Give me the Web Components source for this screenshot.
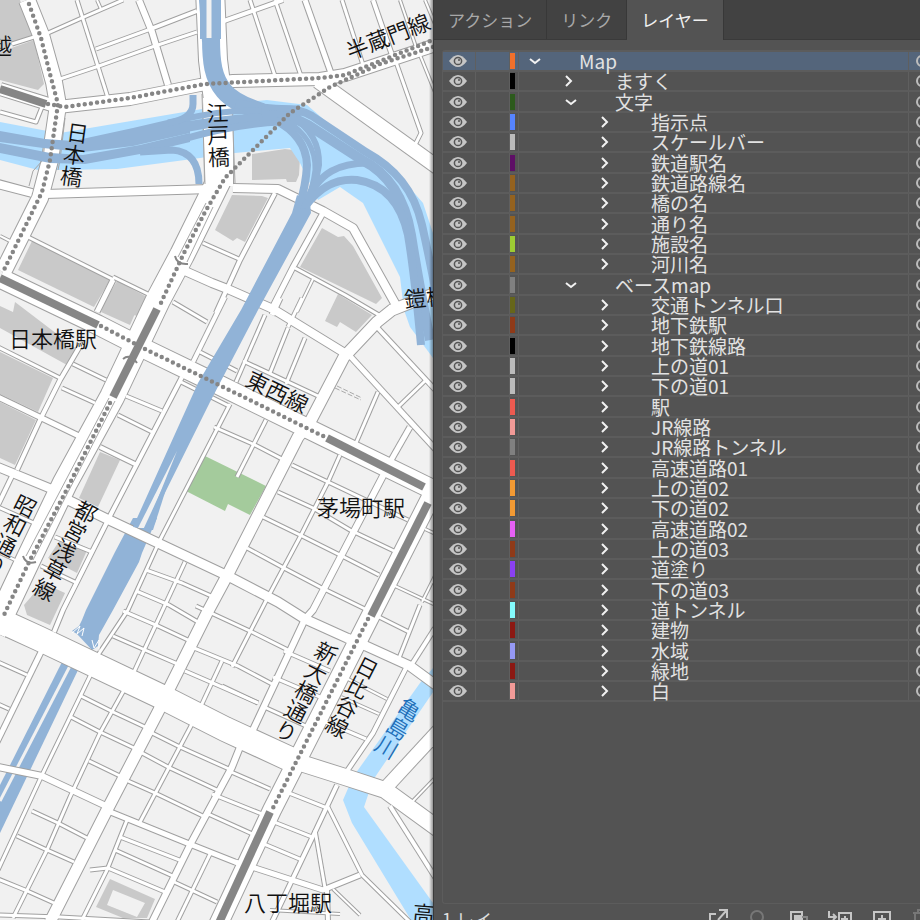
<!DOCTYPE html>
<html lang="ja">
<head>
<meta charset="utf-8">
<title>レイヤー</title>
<style>
  html, body { margin: 0; height: 100%; }
  body {
    overflow: hidden;
    font-family: "Noto Sans CJK JP", "Liberation Sans", sans-serif;
    background: #535353;
  }
</style>
</head>
<body>
<map-workspace>
  <city-map slot="canvas"></city-map>
  <layer-panel slot="panel"></layer-panel>
</map-workspace>

<script>
// [white width, centre line]
const roads = [
  [16, '27,0 41,35 54,82 58,105 50,160 40,198 3,272'],
  [12, '0,89 58,107 130,99 200,85 233,81 320,79 345,75 433,46'],
  [28, '210,-10 213,60 218,100 219,185'],
  [24, '219,180 182,255 158,300 112,397 65,483 28,560 -6,632'],
  [19, '0,278 98,325 147,350 211,381 325,437 440,493'],
  [24, '-10,616 38,638 160,696 225,729 290,759'],
  [16, '285,758 345,777 385,790 440,830'],
  [18, '436,487 371,615 272,810 218,925'],
  [11, '433,294 410,303 392,310 377,322 344,357 310,422 298,437 229,572 207,613 170,687 159,710 108,808 50,922'],
  [14, '318,81 440,169'],
  [3, '77,0 108,98'], [2, '97,0 101,9'], [6, '139,0 152,32 168,85'],
  [3, '48,33 84,17 123,0'], [3, '96,49 148,30'], [4, '148,30 197,11'],
  [3, '60,79 99,66 152,47 197,32'], [3, '12,44 34,37'],
  [3, '0,112 36,122 42,107'],
  [8, '-2,184 32,193'], [8, '45,194 210,189'],
  [2, '0,236 10,241'], [3, '28,237 114,280'], [3, '113,277 150,295'], [5, '113,280 97,312'],
  [3, '203,243 239,259'], [8, '185,271 212,283 230,290 273,309 343,352'],
  [4, '275,193 240,260 216,313'],
  [8, '233,188 278,189 323,211 353,228 396,305'],
  [5, '323,213 293,267 270,312'], [3, '295,268 345,295 379,315'], [2, '313,279 297,312'],
  [3, '250,0 275,76'], [3, '275,0 301,76'], [5, '305,0 332,76'], [3, '342,0 364,68'],
  [4, '373,0 393,58'], [2, '400,0 417,50'], [2, '425,0 435,24'], [4, '224,21 283,0'],
  [3, '396,62 421,133 415,145'], [2, '420,55 435,92'],
  [3, '-2,347 60,378'], [4, '80,346 60,380 40,420 17,470'],
  [3, '73,364 106,380'], [3, '62,388 95,403'], [5, '-2,397 79,436'],
  [8, '-2,467 54,490'], [4, '12,476 -2,505'], [3, '-2,507 34,523'], [2, '-2,552 15,560'],
  [3, '126,396 162,411'], [3, '118,415 152,432'], [4, '100,447 137,465'],
  [4, '182,377 111,514 63,610 54,632'], [3, '181,382 229,406'],
  [3, '230,404 160,540 128,610 98,655'], [3, '214,427 255,445 284,460'],
  [9, '68,500 107,519 228,576 278,602 305,619 347,638 366,646 410,666 440,688'],
  [3, '55,537 92,552'], [3, '41,566 77,583'],
  [4, '225,297 193,362'], [3, '173,302 207,322'], [3, '200,352 237,371'],
  [3, '185,562 133,674'], [3, '146,570 182,583 218,599'], [3, '136,591 169,605 198,622'],
  [3, '123,611 158,626 190,641'], [3, '113,636 145,650 180,665'],
  [3, '340,455 328,482 300,537 268,597 232,667'],
  [6, '385,472 353,533 313,610 305,619 252,732'],
  [3, '292,465 328,482 408,520'], [3, '278,492 313,508 350,530 394,551'],
  [3, '263,517 300,535 340,555 379,575'], [3, '247,548 282,567 320,587 365,609'],
  [3, '266,420 237,477'], [3, '265,315 236,382'], [3, '288,328 270,373'], [3, '305,338 286,384'],
  [3, '243,361 318,396'], [3, '302,298 288,327'], [5, '280,298 272,315'],
  [4, '375,325 440,395'], [5, '350,356 440,454'], [3, '425,381 397,408'],
  [3, '378,392 356,443'], [5, '410,427 390,462'],
  [2, '425,529 440,536'], [2, '395,586 440,607'], [2, '422,602 435,576'],
  [3, '420,605 399,658'], [3, '375,615 409,632'], [4, '435,628 412,664'],
  [4, '406,668 373,733 343,777'], [2, '348,679 387,699'], [2, '341,697 379,714'], [3, '326,722 366,739'],
  [3, '284,651 330,671'], [3, '273,677 320,697'], [3, '262,706 306,726'],
  [3, '196,606 252,632 292,652'], [3, '194,648 238,666 274,685'], [3, '222,686 258,703'],
  [3, '222,661 201,706'], [3, '185,671 215,684 258,703'],
  [3, '192,724 139,824'], [6, '242,742 232,767 191,843 152,922'],
  [3, '152,733 180,747 229,769'], [3, '142,753 170,768 217,790'], [3, '128,781 155,793 205,817'],
  [5, '108,811 187,843 235,862 255,868 323,890 360,875'],
  [3, '127,820 107,870 82,920'], [3, '120,837 182,861'], [3, '115,850 175,877'],
  [3, '90,870 108,868 165,892'], [3, '211,852 177,922'], [3, '172,881 217,902'],
  [5, '42,650 -3,742'], [3, '-2,662 27,675'], [3, '-2,704 9,709'],
  [3, '92,672 42,775 -2,870'], [3, '124,690 100,733 70,797 47,850 13,918'],
  [3, '81,696 113,712 145,727'], [3, '71,717 100,732 134,748'], [3, '89,761 120,776'],
  [3, '32,811 58,823 87,838'], [3, '17,836 47,850 74,862'], [3, '-2,879 25,890 54,903'],
  [6, '-2,767 42,776 106,806'], [3, '-2,915 60,917 150,922'],
  [4, '337,785 315,832 272,922'], [3, '289,793 327,808'], [3, '274,822 312,837'], [3, '264,844 302,860'],
  [3, '328,807 362,875 410,922'], [3, '315,830 325,888'], [4, '327,890 328,922'], [2, '333,889 360,915'],
  [4, '390,806 440,885'], [13, '380,794 440,729'], [2, '411,803 435,778'],
  [3, '229,771 270,789'], [3, '212,794 262,814'], [3, '206,813 257,836'],
  [2, '270,910 340,914']
]

const buildings = [
  '0,0 20,0 32,36 0,50', '0,52 34,40 44,84 38,90 0,80',
  '32,241 110,280 94,307 18,270', '117,281 147,297 139,316 100,310',
  '252,154 285,149 294,150 300,158 299,175 296,182 287,182 286,179 252,180',
  '232,195 262,196 268,198 245,242 237,238 233,241 215,230',
  '322,228 338,237 344,236 353,246 382,298 376,304 300,267', '338,294 372,315 356,332 340,322 337,327 325,321',
  '0,306 13,312 15,302 78,350 67,365 0,328', '0,352 53,378 38,412 0,394', '0,402 36,420 15,465 0,458',
  '107,300 141,300 130,325 101,312', '100,452 120,460 98,507 79,498',
  '62,537 88,548 77,573 48,558', '43,583 65,593 50,625 27,615 24,605'
]

const waters = [
  '0,122 42,130 60,133 202,109 235,103 267,100 307,105 363,153 403,180 423,203 433,233 433,358 410,327 404,310 400,277 363,203 340,187 318,200 300,163 290,148 235,153 200,158 117,169 58,170 38,170 0,160',
  '440,660 420,683 353,777 343,800 352,823 414,925 440,925 433,903 364,807 373,780 440,682'
]

// [width, path] of each carriageway around the interchange
const ramps = [
  [18, 'M211 38C211 62 213 78 224 91Q234 103 262 112'],
  [9, 'M236 103Q262 110 300 110'],
  [6, 'M180 120Q225 109 262 111T300 116'],
  [10, 'M180 128Q230 118 275 118'],
  [7, 'M180 140Q235 124 280 122'],
  [8, 'M262 111Q296 106 312 116L366 152C395 168 414 190 422 225Q431 265 437 300'],
  [10, 'M262 115Q290 114 308 125L362 160C390 174 405 200 411 235Q418 280 430 340'],
  [8, 'M275 120Q306 136 307 165Q306 185 299 208'],
  [5, 'M285 120Q316 138 315 170Q313 190 303 206'],
  [6, 'M292 117Q320 134 319 165Q316 185 306 205'],
  [7, 'M306 204C318 172 340 162 372 163'],
  [8, 'M304 208C320 186 337 178 357 180C385 184 401 203 408 235Q414 270 421 345'],
  [7, 'M193 95V104Q193 119 168 123'],
  [7, 'M140 152L172 150Q199 152 199 184']
]

const tracks = [
  '29,4 41,38 50,74 58,104 50,160 42,192 3,272',
  '48,104 65,107 130,98 205,84 320,78 345,75 433,40',
  '433,47 380,64 330,87 290,113 225,178 205,212 183,255 160,305',
  '110,403 65,493 30,560 3,617',
  '101,326 147,350 211,381 325,437',
  '368,619 272,810'
]

const stations = ['0,89 46,104', '0,278 98,325', '157,309 113,397', '327,438 424,487', '428,503 371,616', '270,812 218,925']

// [text, x, y, angle, vertical, colour]
const labels = [
  ['日本橋駅', 9, 347], ['茅場町駅', 317, 516], ['八丁堀駅', 244, 911],
  ['半蔵門線', 350, 60, -21], ['東西線', 244, 385, 26], ['鎧橋', 405, 308, -6],
  ['越', -10, 54], ['高', 412, 921, 5],
  ['日本橋', 79, 122, 8, true], ['江戸橋', 217, 102, -2, true],
  ['昭和通り', 30, 496, 27, true], ['都営浅草線', 91, 502, 28, true],
  ['新大橋通り', 331, 643, 27, true], ['日比谷線', 372, 658, 27, true],
  ['亀島川', 415, 700, 31, true, '#1f6fb8']
]

class MapWorkspace extends HTMLElement {
  constructor () {
    super()
    this.attachShadow({ mode: 'open' }).innerHTML = `
      <style>
        :host {
          display: grid;
          grid-template-columns: 433fr 487fr;
          height: 100vh;
        }
      </style>
      <slot name="canvas"></slot>
      <slot name="panel"></slot>
    `
  }
}

class CityMap extends HTMLElement {
  constructor () {
    super()
    this.attachShadow({ mode: 'open' })
  }

  connectedCallback () {
    this.render()
  }

  render () {
    const poly = list => list.map(p => `<polygon points="${p}"/>`).join('')
    const lines = list => list.map(p => `<polyline points="${p}"/>`).join('')
    const strokes = extra => roads.map(([w, p]) => `<polyline points="${p}" stroke-width="${w + extra}"/>`).join('')
    const decks = ramps.map(([w, d]) => `<path d="${d}" stroke-width="${w}"/>`).join('')
    const names = labels.map(([text, x, y, angle = 0, vertical = false, fill = '#111']) =>
      `<text class="${vertical ? 'v' : ''}" x="${x}" y="${y}" fill="${fill}" transform="rotate(${angle} ${x} ${y})">${text}</text>`).join('')

    this.shadowRoot.innerHTML = `
      <style>
        :host {
          display: block;
          min-width: 0;
          overflow: hidden;
          isolation: isolate;
          background: #f1f1f1;
        }
        svg { display: block; width: 100%; height: 100%; }
        polyline { fill: none; stroke-linejoin: round; }
        text { font-size: 22px; font-weight: 350; }
        .v { writing-mode: vertical-rl; }
      </style>
      <svg role="img" aria-label="日本橋周辺の地図">
        <defs>
          <linearGradient id="edge"><stop stop-opacity="0"/><stop offset="1" stop-opacity=".4"/></linearGradient>
        </defs>
        <g fill="#c9c9c9">${poly(buildings)}</g>
        <path d="M110 879L155 899 147 918 123 918 96 907zM113 890L107 905 137 917 145 903z" fill="#c9c9c9" fill-rule="evenodd"/>
        <polygon points="205,456 266,486 250,515 228,504 225,511 186,491" fill="#a4cb9c"/>
        <g fill="#b0deff">${poly(waters)}</g>

        <!-- expressway that passes below the streets -->
        <polygon points="133,518 115,552 86,610 82,620 79,626 72,631 77,634 92,650 98,646 99,635 113,610 139,562 142,553 157,518" fill="#91b3d7"/>
        <polygon points="63,660 0,785 0,833 79,668" fill="#91b3d7"/>
        <path d="M71 664L0 801" stroke="#f1f1f1" stroke-width="3"/>

        <g stroke="#a0a0a0">${strokes(2)}</g>
        <g stroke="#fff">${strokes(0)}</g>
        <polygon points="203,98 233,98 233,186 205,186" fill="#fff"/>
        <path d="M202 94L205 184M232 105L235 183M45 140L43 160 33 171 29 186M65 118L60 160 58 170" stroke="#a6a6a6" fill="none"/>
        <path d="M335 388L361 400M337 386L362 398" stroke="#aaa" stroke-dasharray="5 2"/>
        <path d="M72 633L80 626 77 634 84 628 82 636M92 640L94 648 99 640 99 651" stroke="#fff" fill="none"/>

        <!-- elevated expressway -->
        <g fill="#91b3d7">
          <polygon points="0,131 45,139 73,141 133,128 180,117 190,116 190,133 133,146 83,152 43,148 0,142"/>
          <polygon points="0,143 50,153 83,155 140,145 190,133 190,142 140,154 85,164 50,163 0,153"/>
          <polygon points="199,0 215,0 217,42 202,42"/>
          <polygon points="297,195 310,203 311,213 258,310 210,402 147,529 133,527 198,383 241,310 292,213"/>
        </g>
        <path d="M208 0V39M213 0V39" stroke="#91b3d7" stroke-width="16"/>
        <path d="M209 0V39" stroke="#f1f1f1" stroke-width="5"/>
        <polygon points="177,451 138,528 146,528" fill="#f1f1f1"/>
        <polygon points="175,461 153,530 143,530" fill="#91b3d7"/>
        <g stroke="#91b3d7" fill="none">${decks}</g>

        <g stroke="#868686" stroke-width="4.5" stroke-linecap="round" stroke-dasharray="0 6.2">${lines(tracks)}</g>
        <g stroke="#868686" stroke-width="8">${lines(stations)}</g>
        <path d="M206 203L178 257M213 207L187 262M109 398L26 556M115 401L33 560" stroke="#a6a6a6"/>
        <path d="M175 256Q177 265 188 264M123 359Q130 353 137 363M23 556Q26 565 36 562" stroke="#868686" stroke-width="2" fill="none"/>
        ${names}
        <svg x="100%" overflow="visible"><rect x="-4" width="4" height="100%" fill="url(#edge)"/></svg>
      </svg>
    `
  }
}

class PanelTab extends HTMLElement {
  constructor () {
    super()
    this.attachShadow({ mode: 'open' }).innerHTML = `
      <style>
        :host { display: block; border-right: 1px solid #383838; }
        button {
          height: 39px;
          padding: 0 14px;
          border: 0;
          background: none;
          color: #a8a8a8;
          font: 17px/36px "Noto Sans CJK JP", sans-serif;
          display: block;
        }
        :host([active]) { background: #535353; margin-bottom: -1px; }
        :host([active]) button { color: #f0f0f0; }
      </style>
      <button type="button" role="tab"><slot></slot></button>
    `
  }
}

class LayerRow extends HTMLElement {
  constructor () {
    super()
    this.attachShadow({ mode: 'open' })
  }

  connectedCallback () {
    const level = Number(this.getAttribute('level'))
    const arrow = this.hasAttribute('open') ? 'M3 7L8 11 13 7' : 'M3 4L8 9 3 14'
    this.shadowRoot.innerHTML = `
      <style>
        :host {
          display: grid;
          grid-template-columns: 33px 34px 9px 1fr 11px;
          height: 20px;
          box-sizing: border-box;
          border-bottom: 2px solid #5c5c5c;
        }
        :host(:nth-child(3n)) { height: 21px; }
        :host([selected]) { background: #54657b; }
        .cell { border-right: 1px solid #5f5f5f; display: flex; align-items: center; min-width: 0; }
        button { padding: 0; border: 0; background: none; display: block; flex: none; }
        svg { display: block; fill: none; }
        .eye { margin-left: 5px; }
        .swatch { width: 5px; height: 16px; background: ${this.getAttribute('color')}; }
        .name { padding-left: ${8 + level * 36}px; }
        .label { margin-left: 34px; color: #e2e2e2; font-size: 19px; line-height: 18px; white-space: nowrap; }
        .target { overflow: hidden; border: 0; }
        .target button { margin-left: 7px; }
      </style>
      <div class="cell">
        <button class="eye" type="button" aria-label="表示">
          <svg width="20" height="14">
            <path d="M1 7Q10-5 19 7Q10 19 1 7z" fill="#c6c6c6"/>
            <circle cx="10" cy="7" r="3.6" stroke="#555" stroke-width="1.5"/>
            <circle cx="11" cy="6" r="1" fill="#555"/>
          </svg>
        </button>
      </div>
      <div class="cell"></div>
      <div class="cell"><div class="swatch"></div></div>
      <div class="cell name">
        <button type="button" aria-label="展開">
          <svg width="18" height="18"><path d="${arrow}" stroke="#f2f2f2" stroke-width="2"/></svg>
        </button>
        <span class="label"><slot></slot></span>
      </div>
      <div class="cell target">
        <button type="button" aria-label="ターゲット">
          <svg width="12" height="12"><circle cx="6" cy="6" r="5" stroke="#bdbdbd" stroke-width="2"/></svg>
        </button>
      </div>
    `
  }
}

class LayerStatus extends HTMLElement {
  constructor () {
    super()
    // [label, gap after, width, drawing]
    const icons = [
      ['書き出し', 20, 20, '<path d="M8 5H2V18H14M10 11L18 2M11 1H19V9"/>'],
      ['検索', 23, 18, '<circle cx="9" cy="8" r="6" stroke="#777"/>'],
      ['マスク', 18, 19, '<path d="M2 3H13V15H2z"/><path d="M6 7H12V14H6z" fill="#c6c6c6"/><path d="M13 8H18V18H6" stroke="#888"/>'],
      ['サブレイヤー', 20, 26, '<path d="M3 2V8H10M7 5L10 8 7 11M13 4H25V17H13zM19 7V14M15 10H22"/>'],
      ['新規レイヤー', 21, 19, '<path d="M2 3H18V18H2zM10 6V14M6 10H14"/>'],
      ['削除', 0, 8, '<path d="M1 4H12M3 5V18M6 3V1H12" stroke="#777"/>']
    ]
    this.attachShadow({ mode: 'open' }).innerHTML = `
      <style>
        :host {
          display: flex;
          align-items: flex-start;
          height: 16px;
          overflow: hidden;
          padding-left: 8px;
        }
        span { flex: 1; color: #ddd; font-size: 18px; line-height: 30px; }
        button { padding: 0; border: 0; background: none; flex: none; margin-top: 5px; }
        svg { display: block; fill: none; stroke: #c6c6c6; stroke-width: 2; }
      </style>
      <span>1 レイ</span>
      ${icons.map(([label, gap, w, art]) => `<button type="button" aria-label="${label}" style="margin-right:${gap}px"><svg width="${w}" height="20">${art}</svg></button>`).join('')}
    `
  }
}

class LayerPanel extends HTMLElement {
  constructor () {
    super()
    this.attachShadow({ mode: 'open' }).innerHTML = `
      <style>
        :host {
          display: flex;
          flex-direction: column;
          min-width: 0;
          box-sizing: border-box;
          border-left: 1px solid #3a3a3a;
          background: #535353;
          overflow: hidden;
        }
        nav { display: flex; background: #424242; border-bottom: 1px solid #3a3a3a; }
        main {
          flex: 1;
          min-height: 0;
          margin: 10px 0 0 8px;
          border: solid #5c5c5c;
          border-width: 2px 0 1px 1px;
          border-radius: 3px 0 0 3px;
        }
      </style>
      <nav role="tablist">
        <panel-tab>アクション</panel-tab>
        <panel-tab>リンク</panel-tab>
        <panel-tab active>レイヤー</panel-tab>
      </nav>
      <main>
        <layer-row level="0" color="#f0702c" open selected>Map</layer-row>
        <layer-row level="1" color="#000">ますく</layer-row>
        <layer-row level="1" color="#2c5a1c" open>文字</layer-row>
        <layer-row level="2" color="#5684ff">指示点</layer-row>
        <layer-row level="2" color="#bbb">スケールバー</layer-row>
        <layer-row level="2" color="#5e0f66">鉄道駅名</layer-row>
        <layer-row level="2" color="#94621f">鉄道路線名</layer-row>
        <layer-row level="2" color="#94621f">橋の名</layer-row>
        <layer-row level="2" color="#94621f">通り名</layer-row>
        <layer-row level="2" color="#9dcc33">施設名</layer-row>
        <layer-row level="2" color="#94621f">河川名</layer-row>
        <layer-row level="1" color="#808080" open>ベースmap</layer-row>
        <layer-row level="2" color="#66661a">交通トンネル口</layer-row>
        <layer-row level="2" color="#8f3a18">地下鉄駅</layer-row>
        <layer-row level="2" color="#000">地下鉄線路</layer-row>
        <layer-row level="2" color="#bbb">上の道01</layer-row>
        <layer-row level="2" color="#bbb">下の道01</layer-row>
        <layer-row level="2" color="#ed5a50">駅</layer-row>
        <layer-row level="2" color="#f29a97">JR線路</layer-row>
        <layer-row level="2" color="#808080">JR線路トンネル</layer-row>
        <layer-row level="2" color="#ed5a50">高速道路01</layer-row>
        <layer-row level="2" color="#f39a33">上の道02</layer-row>
        <layer-row level="2" color="#f39a33">下の道02</layer-row>
        <layer-row level="2" color="#e760f5">高速道路02</layer-row>
        <layer-row level="2" color="#8f3a18">上の道03</layer-row>
        <layer-row level="2" color="#8a40f2">道塗り</layer-row>
        <layer-row level="2" color="#8f3a18">下の道03</layer-row>
        <layer-row level="2" color="#83fbfd">道トンネル</layer-row>
        <layer-row level="2" color="#8c1812">建物</layer-row>
        <layer-row level="2" color="#9699f5">水域</layer-row>
        <layer-row level="2" color="#8c1812">緑地</layer-row>
        <layer-row level="2" color="#f29a97">白</layer-row>
      </main>
      <layer-status></layer-status>
    `
  }
}

customElements.define('map-workspace', MapWorkspace)
customElements.define('city-map', CityMap)
customElements.define('panel-tab', PanelTab)
customElements.define('layer-row', LayerRow)
customElements.define('layer-status', LayerStatus)
customElements.define('layer-panel', LayerPanel)
</script>
</body>
</html>
